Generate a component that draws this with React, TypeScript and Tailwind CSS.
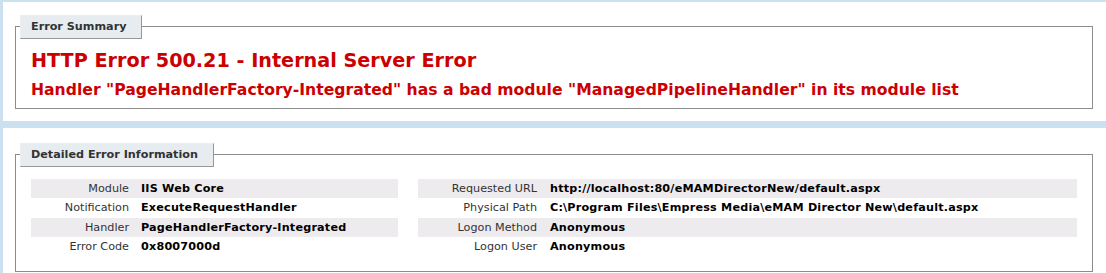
import React from "react";

const leftRows: [string, string][] = [
  ["Module", "IIS Web Core"],
  ["Notification", "ExecuteRequestHandler"],
  ["Handler", "PageHandlerFactory-Integrated"],
  ["Error Code", "0x8007000d"],
];

const rightRows: [string, string][] = [
  ["Requested URL", "http://localhost:80/eMAMDirectorNew/default.aspx"],
  ["Physical Path", "C:\\Program Files\\Empress Media\\eMAM Director New\\default.aspx"],
  ["Logon Method", "Anonymous"],
  ["Logon User", "Anonymous"],
];

function Legend({ children }: { children: React.ReactNode }) {
  return (
    <legend className="ml-[-11px] pl-[10px] pr-[15px] py-[4px] leading-[13.5px] font-bold text-[#333333] bg-[#e7ecf0] border-t border-l border-t-[#ededed] border-l-[#ededed] border-r border-b border-r-[#969696] border-b-[#969696]">
      {children}
    </legend>
  );
}

function Table({ rows, labelW, labelPr }: { rows: [string, string][]; labelW: string; labelPr: string }) {
  return (
    <div className="flex flex-col">
      {rows.map(([k, v], i) => (
        <div key={k} className={`flex py-[3px] leading-[13.5px] ${i % 2 === 0 ? "bg-[#eeebee]" : "bg-white"}`}>
          <div className={`${labelW} ${labelPr} shrink-0 text-right text-[#333333]`}>{k}</div>
          <div className="font-bold text-black whitespace-nowrap tracking-[0.2px]">{v}</div>
        </div>
      ))}
    </div>
  );
}

export default function App() {
  return (
    <div className="h-screen bg-[#cbe1ef] pt-[2px] pl-[3px] text-[11.2px] font-['DejaVu_Sans','Verdana',sans-serif] overflow-hidden">
      <div className="bg-white pl-[12px] pt-[13px] h-[119px]">
        <fieldset className="w-[1078px] border border-[#8c8c8c] px-[15px] h-[94px]">
          <Legend>Error Summary</Legend>
          <h2 className="mt-[10px] text-[19.2px] leading-[23px] font-bold text-[#cc0000] whitespace-nowrap">
            HTTP Error 500.21 - Internal Server Error
          </h2>
          <h3 className="mt-[8px] text-[15.63px] leading-[19px] font-bold text-[#cc0000] whitespace-nowrap">
            Handler "PageHandlerFactory-Integrated" has a bad module "ManagedPipelineHandler" in its module list
          </h3>
        </fieldset>
      </div>
      <div className="bg-white pl-[12px] pt-[15px] mt-[7px] h-[160px]">
        <fieldset className="w-[1078px] border border-[#8c8c8c] px-[15px] pb-[14px]">
          <Legend>Detailed Error Information</Legend>
          <div className="mt-[12px] flex gap-[20px]">
            <div className="w-[367px]">
              <Table rows={leftRows} labelW="w-[110px]" labelPr="pr-[12px]" />
            </div>
            <div className="w-[659px]">
              <Table rows={rightRows} labelW="w-[132px]" labelPr="pr-[13px]" />
            </div>
          </div>
        </fieldset>
      </div>
    </div>
  );
}
